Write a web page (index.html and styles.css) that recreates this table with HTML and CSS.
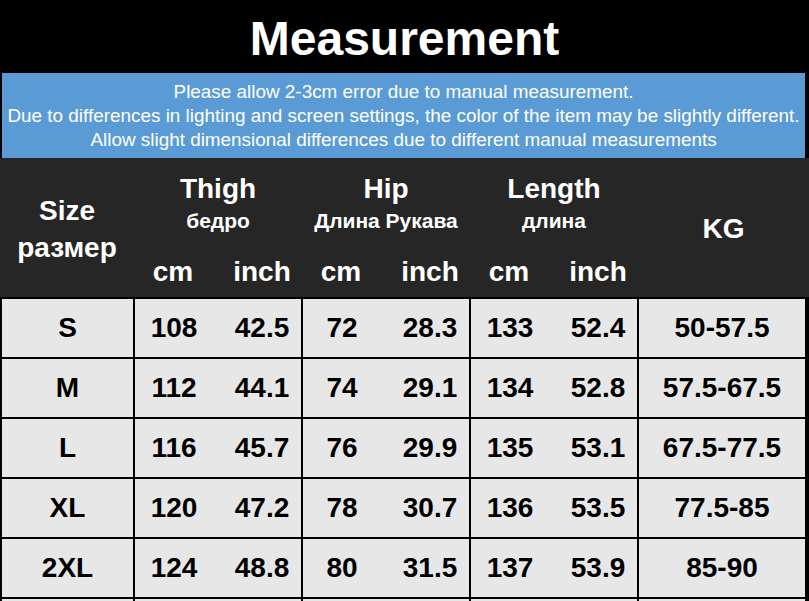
FILE: index.html
```html
<!DOCTYPE html>
<html>
<head>
<meta charset="utf-8">
<link rel="stylesheet" href="styles.css">
</head>
<body>
<div class="sheet">
  <div class="title">Measurement</div>
  <div class="notes">
    <p>Please allow 2-3cm error due to manual measurement.</p>
    <p>Due to differences in lighting and screen settings, the color of the item may be slightly different.</p>
    <p>Allow slight dimensional differences due to different manual measurements</p>
  </div>
  <div class="table">
    <div class="head size-head"><span>Size</span><span>размер</span></div>
    <div class="head group">
      <div class="g-title">Thigh</div>
      <div class="g-sub">бедро</div>
      <div class="pair"><span>cm</span><span class="in">inch</span></div>
    </div>
    <div class="head group">
      <div class="g-title">Hip</div>
      <div class="g-sub">Длина Рукава</div>
      <div class="pair"><span>cm</span><span class="in">inch</span></div>
    </div>
    <div class="head group">
      <div class="g-title">Length</div>
      <div class="g-sub">длина</div>
      <div class="pair"><span>cm</span><span class="in">inch</span></div>
    </div>
    <div class="head kg-head">KG</div>

    <div class="cell size">S</div>
    <div class="cell pair"><span>108</span><span class="in">42.5</span></div>
    <div class="cell pair"><span>72</span><span class="in">28.3</span></div>
    <div class="cell pair"><span>133</span><span class="in">52.4</span></div>
    <div class="cell kg">50-57.5</div>

    <div class="cell size">M</div>
    <div class="cell pair"><span>112</span><span class="in">44.1</span></div>
    <div class="cell pair"><span>74</span><span class="in">29.1</span></div>
    <div class="cell pair"><span>134</span><span class="in">52.8</span></div>
    <div class="cell kg">57.5-67.5</div>

    <div class="cell size">L</div>
    <div class="cell pair"><span>116</span><span class="in">45.7</span></div>
    <div class="cell pair"><span>76</span><span class="in">29.9</span></div>
    <div class="cell pair"><span>135</span><span class="in">53.1</span></div>
    <div class="cell kg">67.5-77.5</div>

    <div class="cell size">XL</div>
    <div class="cell pair"><span>120</span><span class="in">47.2</span></div>
    <div class="cell pair"><span>78</span><span class="in">30.7</span></div>
    <div class="cell pair"><span>136</span><span class="in">53.5</span></div>
    <div class="cell kg">77.5-85</div>

    <div class="cell size">2XL</div>
    <div class="cell pair"><span>124</span><span class="in">48.8</span></div>
    <div class="cell pair"><span>80</span><span class="in">31.5</span></div>
    <div class="cell pair"><span>137</span><span class="in">53.9</span></div>
    <div class="cell kg">85-90</div>

    <div class="cell size"></div>
    <div class="cell pair"></div>
    <div class="cell pair"></div>
    <div class="cell pair"></div>
    <div class="cell kg"></div>
  </div>
</div>
</body>
</html>
```

FILE: styles.css
```css
* { box-sizing: border-box; }
html, body { margin: 0; padding: 0; background: #ffffff; }
body {
  width: 809px;
  height: 601px;
  overflow: hidden;
  font-family: "Liberation Sans", Arial, "DejaVu Sans", sans-serif;
}
.sheet {
  width: 809px;
  background: #000;
}
.title {
  height: 73px;
  line-height: 73px;
  padding-top: 2px;
  text-align: center;
  color: #fff;
  font-weight: bold;
  font-size: 48px;
  background: #000;
}
.notes {
  margin: 0 4px 0 2px;
  height: 85px;
  padding-top: 7px;
  background: #5b9bd5;
  color: #fff;
  text-align: center;
  font-size: 18.9px;
  line-height: 24px;
}
.notes p { margin: 0; white-space: nowrap; }
.table {
  display: grid;
  grid-template-columns: 131px 166px 166px 166px 166px;
  grid-template-rows: 139px 58px 58px 58px 58px 58px 58px;
  column-gap: 2px;
  row-gap: 2px;
  padding: 0 4px 0 2px;
  background: #000;
}
.head {
  background: #262626;
  color: #fff;
  font-weight: bold;
}
.table > .head { margin: 0 -1px; }
.table > .head:first-child { margin-left: -2px; }
.table > .kg-head { margin-right: -4px; }
.size-head {
  display: flex;
  flex-direction: column;
  align-items: center;
  padding-top: 34px;
  font-size: 28px;
  line-height: 37px;
}
.group {
  display: flex;
  flex-direction: column;
  padding-top: 14px;
}
.g-title {
  text-align: center;
  font-size: 28px;
  line-height: 34px;
}
.g-sub {
  text-align: center;
  font-size: 21px;
  line-height: 30px;
}
.group .pair {
  margin-top: 18px;
  height: 36px;
  font-size: 28px;
  line-height: 36px;
}
.kg-head {
  display: flex;
  align-items: center;
  justify-content: center;
  padding-top: 3px;
  font-size: 28px;
}
.pair {
  display: grid;
  grid-template-columns: 78px 1fr;
}
.pair span { text-align: center; }
.pair .in { padding-left: 10px; }
.cell {
  background: #e7e7e7;
  color: #000;
  font-weight: bold;
  font-size: 28px;
  line-height: 58px;
}
.cell.size, .cell.kg { text-align: center; }
```
